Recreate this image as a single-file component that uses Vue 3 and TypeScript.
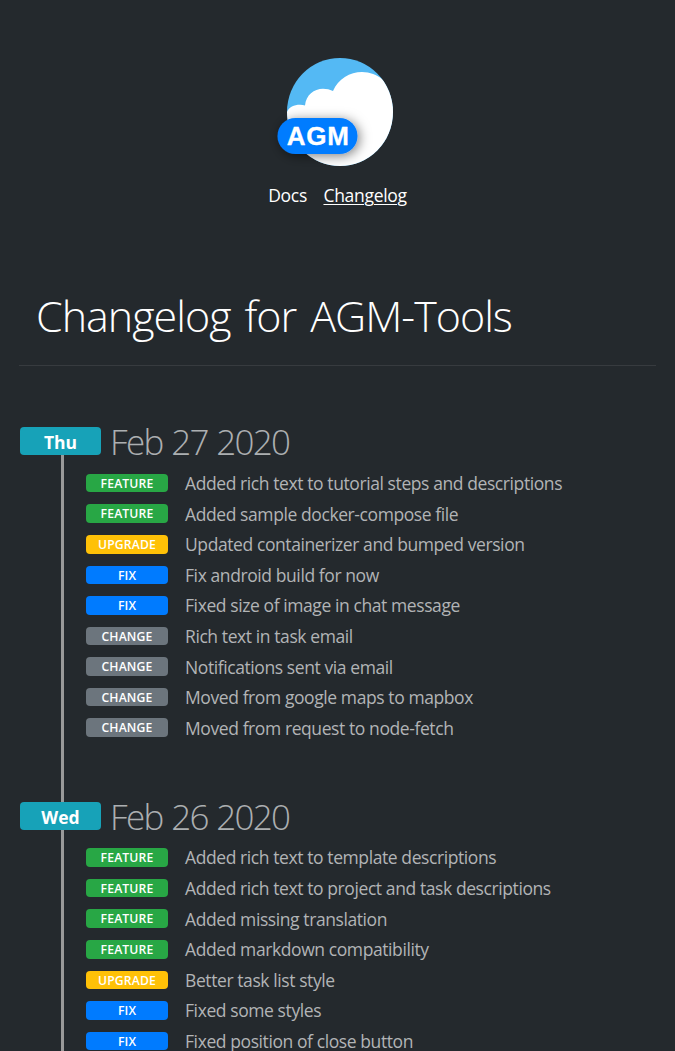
<script setup lang="ts">
type Kind = 'feature' | 'upgrade' | 'fix' | 'change'

interface Entry {
  kind: Kind
  text: string
}

interface Release {
  day: string
  date: string
  entries: Entry[]
}

const releases: Release[] = [
  {
    day: 'Thu',
    date: 'Feb 27 2020',
    entries: [
      { kind: 'feature', text: 'Added rich text to tutorial steps and descriptions' },
      { kind: 'feature', text: 'Added sample docker-compose file' },
      { kind: 'upgrade', text: 'Updated containerizer and bumped version' },
      { kind: 'fix', text: 'Fix android build for now' },
      { kind: 'fix', text: 'Fixed size of image in chat message' },
      { kind: 'change', text: 'Rich text in task email' },
      { kind: 'change', text: 'Notifications sent via email' },
      { kind: 'change', text: 'Moved from google maps to mapbox' },
      { kind: 'change', text: 'Moved from request to node-fetch' },
    ],
  },
  {
    day: 'Wed',
    date: 'Feb 26 2020',
    entries: [
      { kind: 'feature', text: 'Added rich text to template descriptions' },
      { kind: 'feature', text: 'Added rich text to project and task descriptions' },
      { kind: 'feature', text: 'Added missing translation' },
      { kind: 'feature', text: 'Added markdown compatibility' },
      { kind: 'upgrade', text: 'Better task list style' },
      { kind: 'fix', text: 'Fixed some styles' },
      { kind: 'fix', text: 'Fixed position of close button' },
    ],
  },
]
</script>

<template>
  <div class="page">
    <header class="header">
      <svg class="logo" width="150" height="130" viewBox="260 48 150 130" role="img" aria-label="AGM">
        <defs>
          <clipPath id="disc"><ellipse cx="340" cy="112" rx="53" ry="54" /></clipPath>
          <filter id="shadow" x="-30%" y="-50%" width="160%" height="220%">
            <feDropShadow dx="2" dy="2" stdDeviation="6" flood-color="#000" flood-opacity="0.5" />
          </filter>
        </defs>
        <g clip-path="url(#disc)">
          <rect x="280" y="50" width="120" height="120" fill="#54b9f4" />
          <path
            d="M280 110 L287 112 C289 107 294 104.700 300 104.700 Q303 104.700 305 105.500 C306 95 314 88.800 323 88.800 Q328.500 88.800 333 91 C338 79 350 72 362 72 C370 72 377 75 382 79 L400 92 V172 H280 Z"
            fill="#fff"
          />
        </g>
        <rect x="277.500" y="118" width="80" height="36" rx="18" fill="#007bff" filter="url(#shadow)" />
        <text class="logo-text" x="286.800" y="145" textLength="62" lengthAdjust="spacing">AGM</text>
      </svg>
      <nav class="nav">
        <a class="docs">Docs</a>
        <a class="active">Changelog</a>
      </nav>
    </header>

    <h1 class="title">Changelog for AGM-Tools</h1>

    <main class="timeline">
      <section v-for="release in releases" :key="release.date" class="release">
        <div class="release-head">
          <span class="day">{{ release.day }}</span>
          <h2 class="date">{{ release.date }}</h2>
        </div>
        <ul class="entries">
          <li v-for="entry in release.entries" :key="entry.text" class="entry">
            <span class="badge" :class="entry.kind">{{ entry.kind }}</span>
            <span class="text">{{ entry.text }}</span>
          </li>
        </ul>
      </section>
    </main>
  </div>
</template>

<style>
html,
body {
  background: #24292d;
  overflow: hidden;
}
</style>

<style scoped>
.page {
  box-sizing: border-box;
  height: 1051px;
  overflow: hidden;
  padding: 48px 19px 0;
  background: #24292d;
  color: #fff;
  font-family: 'Open Sans', 'Noto Sans', sans-serif;
}
.header {
  display: flex;
  flex-direction: column;
  align-items: center;
  height: 238px;
}
.logo {
  display: block;
  margin-right: 5px;
}
.logo-text {
  fill: #fff;
  stroke: #fff;
  stroke-width: 0.3;
  stroke-linejoin: round;
  font: bold 26px 'Liberation Sans', Arial, sans-serif;
}
.nav {
  display: flex;
  gap: 16.500px;
  margin-top: 4px;
  font-size: 17.5px;
  line-height: 26px;
  letter-spacing: -0.3px;
}
.active {
  text-decoration: underline;
  text-underline-offset: 2px;
  text-decoration-thickness: 1px;
}
.title {
  margin: 0;
  height: 79px;
  padding-left: 17px;
  border-bottom: 1px solid #373b3f;
  font-size: 43px;
  font-weight: 300;
  line-height: 59px;
  letter-spacing: -1px;
  word-spacing: 3.800px;
  white-space: nowrap;
}
.timeline {
  padding-top: 61.300px;
}
.release {
  height: 374.450px;
  position: relative;
}
.release::before {
  content: '';
  position: absolute;
  left: 42px;
  top: 0;
  width: 3px;
  height: 100%;
  background: #999;
}
.release-head {
  position: relative;
  display: flex;
  height: 28px;
  padding-left: 1px;
}
.day {
  width: 81px;
  height: 28px;
  border-radius: 4px;
  background: #17a2b8;
  font-size: 17.500px;
  font-weight: 700;
  line-height: 30px;
  text-align: center;
}
.date {
  margin: 0 0 0 9px;
  color: #acafb1;
  font-size: 35px;
  font-weight: 300;
  line-height: 29px;
  letter-spacing: -1.700px;
  word-spacing: 1.200px;
  white-space: nowrap;
}
.entries {
  display: flex;
  flex-direction: column;
  gap: 12px;
  margin: 0;
  padding: 18.450px 0 0 67px;
  list-style: none;
}
.entry {
  display: flex;
  align-items: center;
  height: 18.600px;
}
.badge {
  width: 82px;
  height: 18.600px;
  margin-right: 17px;
  border-radius: 4px;
  font-size: 12.200px;
  font-weight: 600;
  letter-spacing: 0.150px;
  line-height: 19px;
  text-align: center;
  text-transform: uppercase;
}
.feature {
  background: #28a745;
}
.upgrade {
  background: #ffc107;
}
.fix {
  background: #007bff;
}
.change {
  background: #6c757d;
}
.text {
  color: #b2b4b6;
  font-size: 17.500px;
  line-height: 20px;
  letter-spacing: -0.410px;
  white-space: nowrap;
}
</style>
